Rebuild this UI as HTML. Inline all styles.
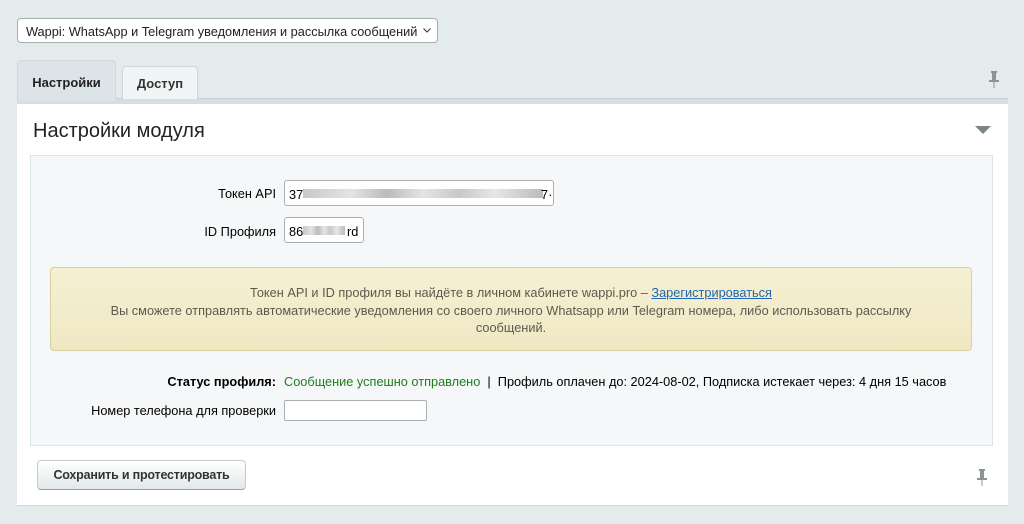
<!DOCTYPE html><html><head><meta charset="utf-8"><style>
*{box-sizing:border-box}body{margin:0;width:1024px;height:524px;background:#e4ebed;font-family:"Liberation Sans",Arial,sans-serif;font-size:12.75px;color:#000;position:relative;overflow:hidden}
.a{position:absolute}
.sel{left:17px;top:18px;width:421px;height:25px;background:#fff;border:1px solid #a8aeb0;border-radius:4px;font-size:12.75px;padding:5px 0 0 8px;color:#222}
.tab{border:1px solid #cfd8db;border-bottom:none;border-radius:4px 4px 0 0;font-weight:bold;font-size:13px;text-align:center}
.lbl{right:748px;text-align:right}
.inp{background:#fff;border:1px solid #a9b0b3;border-radius:3px;height:26px}
.blur{position:absolute;top:8px;height:9px;background:linear-gradient(90deg,#bbb,#ddd 20%,#aaa 35%,#ddd 50%,#bbb 65%,#e0e0e0 80%,#aaa);opacity:.8}
</style></head><body>
<div class="a sel">Wappi: WhatsApp и Telegram уведомления и рассылка сообщений<svg style="position:absolute;right:6px;top:9px" width="8" height="5"><path d="M0.5 0.5L4 4L7.5 0.5" stroke="#333" fill="none"/></svg></div>
<div class="a" style="left:17px;top:98px;width:991px;height:6px;background:#d5dee1;border-top:1px solid #c9d3d6"></div>
<div class="a tab" style="left:17px;top:60px;width:99px;height:41px;background:#dce4e7;padding-top:14px;color:#222">Настройки</div>
<div class="a tab" style="left:122px;top:66px;width:76px;height:33px;background:#f2f5f6;padding-top:9px;color:#333">Доступ</div>
<svg class="a" style="left:988px;top:71px" width="12" height="18"><rect x="3" y="0" width="6" height="2" fill="#8a9396"/><rect x="4" y="2" width="4" height="7" fill="#8a9396"/><rect x="1" y="9" width="10" height="2" fill="#8a9396"/><rect x="5.5" y="11" width="1" height="6" fill="#8a9396"/></svg>
<div class="a" style="left:17px;top:104px;width:991px;height:402px;background:#fff;border-bottom:1px solid #cfd6d8"></div>
<div class="a" style="left:33px;top:120px;font-size:20px;color:#222">Настройки модуля</div>
<svg class="a" style="left:975px;top:126px" width="16" height="9"><path d="M0 0H16L8 8Z" fill="#7c8588"/></svg>
<div class="a" style="left:30px;top:155px;width:963px;height:291px;background:#f5f7f8;border:1px solid #dbe4e7"></div>
<div class="a lbl" style="top:186px">Токен API</div>
<div class="a inp" style="left:284px;top:180px;width:270px;padding:6px 0 0 4px;overflow:hidden">37<div class="blur" style="left:18px;width:240px"></div><span style="position:absolute;left:256px">7·</span></div>
<div class="a lbl" style="top:224px">ID Профиля</div>
<div class="a inp" style="left:284px;top:217px;width:80px;padding:6px 0 0 4px;overflow:hidden">86<div class="blur" style="left:18px;width:42px"></div><span style="position:absolute;left:62px">rd</span></div>
<div class="a" style="left:50px;top:267px;width:922px;height:84px;background:linear-gradient(#f6f0d4,#f0e8c3);border:1px solid #d9cf9f;border-radius:4px;text-align:center;color:#5c5a4c;line-height:17.5px;padding-top:16px">Токен API и ID профиля вы найдёте в личном кабинете wappi.pro – <span style="color:#2067b0;text-decoration:underline">Зарегистрироваться</span><br>Вы сможете отправлять автоматические уведомления со своего личного Whatsapp или Telegram номера, либо использовать рассылку<br>сообщений.</div>
<div class="a lbl" style="top:374px;font-weight:bold">Статус профиля:</div>
<div class="a" style="left:284px;top:374px"><span style="color:#1e7d1e">Сообщение успешно отправлено</span> &nbsp;|&nbsp; Профиль оплачен до: 2024-08-02, Подписка истекает через: 4 дня 15 часов</div>
<div class="a lbl" style="top:403px">Номер телефона для проверки</div>
<div class="a inp" style="left:284px;top:400px;width:143px;height:21px;border-radius:2px"></div>
<div class="a" style="left:37px;top:460px;width:209px;height:30px;background:linear-gradient(#fff,#e3e8ea);border:1px solid #c4cbce;border-bottom-color:#99a2a5;border-radius:4px;font-weight:bold;font-size:12.5px;letter-spacing:-0.2px;color:#333;text-align:center;padding-top:7px">Сохранить и протестировать</div>
<svg class="a" style="left:976px;top:469px" width="12" height="18"><rect x="3" y="0" width="6" height="2" fill="#8a9396"/><rect x="4" y="2" width="4" height="7" fill="#8a9396"/><rect x="1" y="9" width="10" height="2" fill="#8a9396"/><rect x="5.5" y="11" width="1" height="6" fill="#8a9396"/></svg>
</body></html>
